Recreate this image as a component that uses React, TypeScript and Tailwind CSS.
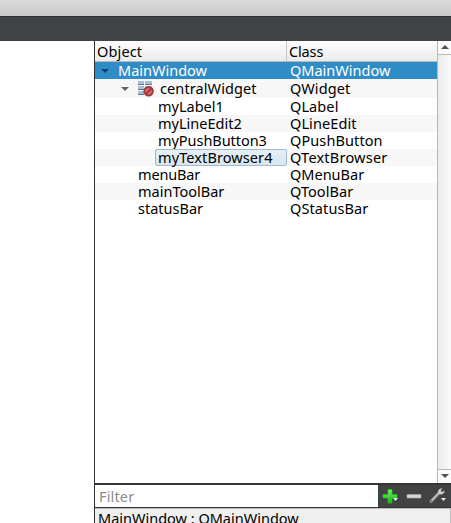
type Row = {
  name: string;
  cls: string;
  indent: string;
  nameTrack: string;
  clsTrack: string;
  kind?: "selected" | "group" | "hover";
};

const rows: Row[] = [
  { name: "MainWindow", cls: "QMainWindow", indent: "pl-[23px]", nameTrack: "tracking-[0px]", clsTrack: "tracking-[0px]", kind: "selected" },
  { name: "centralWidget", cls: "QWidget", indent: "pl-[43px]", nameTrack: "tracking-[0.1px]", clsTrack: "tracking-[0.1px]", kind: "group" },
  { name: "myLabel1", cls: "QLabel", indent: "pl-[63px]", nameTrack: "tracking-[0px]", clsTrack: "tracking-[0.1px]" },
  { name: "myLineEdit2", cls: "QLineEdit", indent: "pl-[63px]", nameTrack: "tracking-[0px]", clsTrack: "tracking-[0.1px]" },
  { name: "myPushButton3", cls: "QPushButton", indent: "pl-[63px]", nameTrack: "tracking-[-0.05px]", clsTrack: "tracking-[0.1px]" },
  { name: "myTextBrowser4", cls: "QTextBrowser", indent: "pl-[60px]", nameTrack: "tracking-[0.1px]", clsTrack: "tracking-[0.22px]", kind: "hover" },
  { name: "menuBar", cls: "QMenuBar", indent: "pl-[43px]", nameTrack: "tracking-[-0.15px]", clsTrack: "tracking-[0px]" },
  { name: "mainToolBar", cls: "QToolBar", indent: "pl-[43px]", nameTrack: "tracking-[0px]", clsTrack: "tracking-[0.05px]" },
  { name: "statusBar", cls: "QStatusBar", indent: "pl-[43px]", nameTrack: "tracking-[0px]", clsTrack: "tracking-[0.1px]" },
];

function Arrow({ className, up }: { className: string; up?: boolean }) {
  return (
    <svg width="8" height="4" viewBox="0 0 8 4" className={className} fill="currentColor">
      <path d={up ? "M0 4L4 0L8 4Z" : "M0 0H8L4 4Z"} />
    </svg>
  );
}

function WidgetIcon() {
  return (
    <svg width="16" height="16" viewBox="0 0 16 16" className="mr-[6px] shrink-0">
      <g fill="#a4c0d9">
        <rect x="0" y="0" width="6" height="4" />
        <rect x="7" y="0" width="7" height="4" />
        <rect x="0" y="5" width="6" height="4" />
        <rect x="7" y="5" width="7" height="4" />
        <rect x="0" y="10" width="6" height="4" />
      </g>
      <path d="M0 3.500H6M7 3.500H14M0 8.500H6M0 13.500H6" stroke="#60798f" />
      <circle cx="10.600" cy="10.300" r="4.400" fill="#c05f61" stroke="#a5353a" strokeWidth="1.700" />
      <path d="M7.600 13.200L13.500 7.400" stroke="#a5353a" strokeWidth="1.800" />
      <path d="M7.800 10.500L10.800 7.600M10.400 13L13.200 10.200" stroke="#d99a99" strokeWidth=".8" />
    </svg>
  );
}

function TreeRow({ row, alt }: { row: Row; alt: boolean }) {
  const selected = row.kind === "selected";
  const bg = selected ? "bg-[#308cc6] text-white" : alt ? "bg-[#f7f7f7]" : "bg-white";
  const height = row.kind === "group" ? "h-[19px]" : "h-[17px]";
  return (
    <div className={`flex items-center ${height} ${bg}`}>
      <div className={`flex h-full w-[192px] shrink-0 items-center ${row.indent}`}>
        {selected && <Arrow className="-ml-[17px] mr-[9px] text-[#16445f]" />}
        {row.kind === "group" && (
          <>
            <Arrow className="-ml-[17px] mr-[9px] text-[#606060]" />
            <WidgetIcon />
          </>
        )}
        {row.kind === "hover" ? (
          <span className={`flex h-[17px] w-[132px] items-center rounded-[2px] border border-[#a3bccd] bg-linear-to-b from-[#e5eff6] to-[#d9e6ef] pl-[2px] ${row.nameTrack}`}>
            <span>{row.name}</span>
          </span>
        ) : (
          <span className={row.nameTrack}>{row.name}</span>
        )}
      </div>
      <span className={`pl-[3px] ${row.clsTrack}`}>{row.cls}</span>
    </div>
  );
}

export default function App() {
  return (
    <div className="flex h-[523px] w-[451px] flex-col overflow-hidden bg-white font-['Noto_Sans',sans-serif] text-[14.5px] leading-[17px] whitespace-nowrap text-black">
      <div className="h-[16px] shrink-0 bg-linear-to-b from-[#d9d9d9] to-[#c9c9c9]" />
      <div className="h-[25px] shrink-0 border-t border-[#2e2f30] bg-[#404244]" />
      <div className="flex min-h-0 flex-1">
        <div className="w-[94px] shrink-0" />
        <div className="flex min-w-0 flex-1 flex-col border-l border-[#303030]">
          <div className="flex h-[442px] shrink-0">
            <div className="w-[342px] shrink-0">
              <div className="flex h-[21px] border-b border-[#b8b8b8] bg-linear-to-b from-[#fdfdfd] to-[#ebebeb]">
                <div className="w-[192px] border-r border-[#c8c8c8] pt-[2px] pl-[2px] tracking-[0.15px]">Object</div>
                <div className="pt-[2px] pl-[2px] tracking-[-0.15px]">Class</div>
              </div>
              {rows.map((row, i) => (
                <TreeRow key={row.name} row={row} alt={i % 2 === 1} />
              ))}
            </div>
            <div className="flex w-[14px] flex-col justify-between border-l border-[#b8b8b8] bg-linear-to-r from-[#ececec] to-[#fafafa]">
              <div className="flex h-[14px] items-start justify-center border-b border-[#b8b8b8] bg-[#fafafa] pt-[4px]">
                <Arrow up className="text-[#505050]" />
              </div>
              <div className="flex h-[14px] items-start justify-center border-t border-[#b8b8b8] bg-[#fafafa] pt-[4px]">
                <Arrow className="text-[#505050]" />
              </div>
            </div>
          </div>
          <div className="flex h-[25px] shrink-0 border-t-2 border-b border-[#343536] bg-[#404244]">
            <div className="flex w-[283px] items-center bg-white pl-[4px] tracking-[0.15px] text-[#8c8c8c]">Filter</div>
            <svg width="72" height="22" viewBox="378 485 72 22" className="shrink-0">
              <defs>
                <linearGradient id="plus" x1="0" y1="0" x2="0" y2="1">
                  <stop offset="0" stopColor="#70f45a" />
                  <stop offset="1" stopColor="#16b619" />
                </linearGradient>
              </defs>
              <path d="M388 489.500h4v5h5v3.500h-5v5h-4v-5h-5v-3.500h5z" fill="url(#plus)" stroke="#26c225" strokeWidth=".7" />
              <path d="M393 498h5l-2.500 3z" fill="#eee" />
              <rect x="407" y="494.500" width="14" height="3.500" rx=".5" fill="#d5d5d5" stroke="#aaa" strokeWidth=".6" />
              <path d="M431 501.500L440 492" stroke="#a9a9a5" strokeWidth="2.600" strokeLinecap="round" />
              <path d="M431.500 500L439.500 491.500" stroke="#d2d2ce" strokeWidth=".8" />
              <path d="M442.500 488.500C439 488 437 491 438.500 493.500C441 495.500 444.500 494 444.700 490.500L442 492L440.500 490.700Z" fill="#cececa" />
              <circle cx="431.500" cy="501.200" r=".8" fill="#555" />
              <path d="M441 498h5l-2.500 3z" fill="#eee" />
            </svg>
          </div>
          <div className="min-h-0 flex-1 border-t border-r border-[#bcbcbc] bg-[#efefef] pt-px pl-[3px]">MainWindow : QMainWindow</div>
        </div>
      </div>
    </div>
  );
}
